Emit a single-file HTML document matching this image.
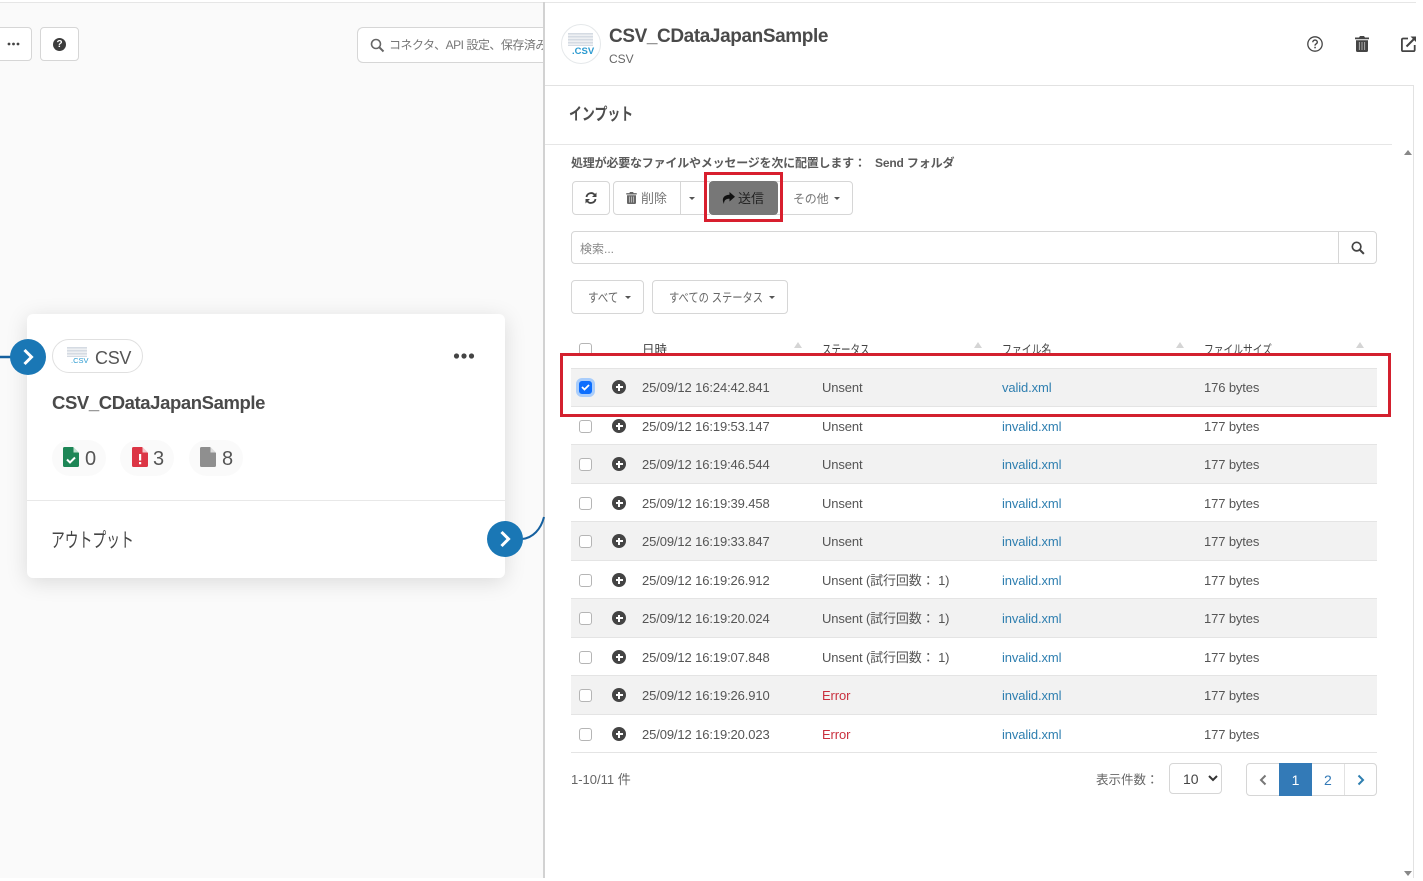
<!DOCTYPE html>
<html lang="ja"><head><meta charset="utf-8"><title>CSV_CDataJapanSample</title>
<style>
html,body{margin:0;padding:0;background:#fff}
body{width:1423px;height:881px;position:relative;overflow:hidden;font-family:"Liberation Sans","Noto Sans CJK JP",sans-serif;font-size:13px;color:#555}
.t{position:absolute;white-space:nowrap;line-height:18px;transform-origin:left center}
.btn{position:absolute;box-sizing:border-box;background:#fff;border:1px solid #d6d6d6;border-radius:4px}
.row{position:absolute;left:571px;width:806px;height:37px;border-bottom:1px solid #e4e4e4;white-space:nowrap}
.row.s{background:#f2f2f2;height:38px}
.row>span{position:absolute;top:11px;line-height:18px;letter-spacing:-.12px}
.row>.cb{top:13px;left:8px;width:11px;height:11px;border:1px solid #b5b5b5;border-radius:3px;background:#fff}
.row>.pl{top:12px;left:41px;width:14px;height:14px;border-radius:50%;background:#444}
.row>.pl:before{content:"";position:absolute;left:3.5px;top:6px;width:7px;height:2px;background:#fff}
.row>.pl:after{content:"";position:absolute;left:6px;top:3.5px;width:2px;height:7px;background:#fff}
.d{left:71px}.st{left:251px}.f{left:431px;color:#2f7fb0}.z{left:633px}.e{color:#c9303e}
.car{position:absolute;width:0;height:0;border-left:3px solid transparent;border-right:3px solid transparent;border-top:3px solid #555}
.sort{position:absolute;width:0;height:0;border-left:4px solid transparent;border-right:4px solid transparent;border-bottom:6px solid #d5d5d5}
</style></head><body>

<!-- left canvas -->
<div style="position:absolute;left:0;top:3px;width:544px;height:875px;background:#fafafa"></div>
<div style="position:absolute;left:0;top:2px;width:1416px;height:1px;background:#e6e6e6"></div>
<div style="position:absolute;left:543px;top:2px;width:2px;height:876px;background:#d2d2d2"></div>

<div class="btn" style="left:-10px;top:27px;width:42px;height:34px"></div>
<svg style="position:absolute;left:0;top:40px" width="24" height="8" viewBox="0 0 24 8"><circle cx="9" cy="4" r="1.400" fill="#444"/><circle cx="13.500" cy="4" r="1.400" fill="#444"/><circle cx="18" cy="4" r="1.400" fill="#444"/></svg>
<div class="btn" style="left:40px;top:27px;width:39px;height:34px"></div>
<div style="position:absolute;left:53px;top:38px;width:13px;height:13px;border-radius:50%;background:#3c3c3c;color:#fff;font:bold 10px/13px 'Liberation Sans',sans-serif;text-align:center">?</div>

<div style="position:absolute;left:357px;top:27px;width:186px;height:36px;box-sizing:border-box;border:1px solid #d6d6d6;border-right:0;border-radius:6px 0 0 6px;background:#fff;overflow:hidden">
<svg style="position:absolute;left:12px;top:10px" width="15" height="15" viewBox="0 0 15 15"><circle cx="6" cy="6" r="4.500" fill="none" stroke="#666" stroke-width="1.600"/><path d="M9.500 9.500L13.500 13.500" stroke="#666" stroke-width="2"/></svg>
<span class="t" style="left:31px;top:8px;font-size:12px;color:#777;letter-spacing:-.5px">コネクタ、API 設定、保存済み</span>
</div>

<!-- card -->
<div style="position:absolute;left:27px;top:314px;width:478px;height:264px;background:#fff;border-radius:6px;box-shadow:0 4px 22px rgba(0,0,0,.13)"></div>
<div style="position:absolute;left:27px;top:500px;width:478px;height:1px;background:#e8e8e8"></div>
<svg style="position:absolute;left:0;top:330px" width="546" height="230" viewBox="0 0 546 230"><path d="M0 27H12" stroke="#15609f" stroke-width="2.500" fill="none"/><path d="M522 209C533 208 541 199 544 187" stroke="#15609f" stroke-width="2" fill="none"/></svg>
<svg style="position:absolute;left:10px;top:339px" width="36" height="36" viewBox="0 0 36 36"><circle cx="18" cy="18" r="18" fill="#1a77b5"/><path d="M14.500 11l7 7-7 7" fill="none" stroke="#fff" stroke-width="3"/></svg>
<svg style="position:absolute;left:487px;top:521px" width="36" height="36" viewBox="0 0 36 36"><circle cx="18" cy="18" r="18" fill="#1a77b5"/><path d="M14.500 11l7 7-7 7" fill="none" stroke="#fff" stroke-width="3"/></svg>

<div style="position:absolute;left:52px;top:339px;width:91px;height:34px;box-sizing:border-box;border:1px solid #e0e0e0;border-radius:17px;background:#fff"></div>
<div style="position:absolute;left:67px;top:347px;width:20px;height:10px;background:repeating-linear-gradient(#d5dbe3 0,#d5dbe3 1.500px,#eef0f3 1.500px,#eef0f3 3px)"></div>
<div class="t" style="left:71px;top:355px;font-size:7.500px;line-height:12px;color:#2b9ad0">.CSV</div>
<div class="t" style="left:95px;top:346px;font-size:18px;line-height:24px;color:#555;letter-spacing:-.3px">CSV</div>
<svg style="position:absolute;left:452px;top:351px" width="24" height="10" viewBox="0 0 24 10"><circle cx="4.500" cy="5" r="2.600" fill="#444"/><circle cx="12" cy="5" r="2.600" fill="#444"/><circle cx="19.500" cy="5" r="2.600" fill="#444"/></svg>
<div class="t" style="left:52px;top:390px;font-size:18.500px;line-height:26px;font-weight:bold;color:#4a4a4a;letter-spacing:-.4px">CSV_CDataJapanSample</div>

<div style="position:absolute;left:52px;top:440px;width:54px;height:36px;border-radius:18px;background:#fafafa"></div>
<div style="position:absolute;left:120px;top:440px;width:54px;height:36px;border-radius:18px;background:#fafafa"></div>
<div style="position:absolute;left:189px;top:440px;width:54px;height:36px;border-radius:18px;background:#fafafa"></div>
<svg style="position:absolute;left:63px;top:447px" width="16" height="20" viewBox="0 0 16 20"><path d="M1.500 0H10L16 6V18.500A1.500 1.500 0 0 1 14.500 20H1.500A1.500 1.500 0 0 1 0 18.500V1.500A1.500 1.500 0 0 1 1.500 0Z" fill="#1d8656"/><path d="M10.500 0L16 5.500H10.500Z" fill="#bfe0cf"/><path d="M4 12.500l3 3 5-5" fill="none" stroke="#fff" stroke-width="2"/></svg>
<div class="t" style="left:85px;top:447px;font-size:20px;line-height:24px;color:#555">0</div>
<svg style="position:absolute;left:132px;top:447px" width="16" height="20" viewBox="0 0 16 20"><path d="M1.500 0H10L16 6V18.500A1.500 1.500 0 0 1 14.500 20H1.500A1.500 1.500 0 0 1 0 18.500V1.500A1.500 1.500 0 0 1 1.500 0Z" fill="#dc3545"/><path d="M10.500 0L16 5.500H10.500Z" fill="#f5c6cb"/><path d="M7 7h2.200v6.500H7zM7 15h2.200v2.200H7z" fill="#fff"/></svg>
<div class="t" style="left:153px;top:447px;font-size:20px;line-height:24px;color:#555">3</div>
<svg style="position:absolute;left:200px;top:447px" width="16" height="20" viewBox="0 0 16 20"><path d="M1.500 0H10L16 6V18.500A1.500 1.500 0 0 1 14.500 20H1.500A1.500 1.500 0 0 1 0 18.500V1.500A1.500 1.500 0 0 1 1.500 0Z" fill="#8f8f8f"/><path d="M10.500 0L16 5.500H10.500Z" fill="#ddd"/></svg>
<div class="t" style="left:222px;top:447px;font-size:20px;line-height:24px;color:#555">8</div>
<div class="t" style="left:51px;top:528px;font-size:20px;line-height:26px;color:#444;transform:scaleX(.69)">アウトプット</div>

<!-- right panel -->
<div style="position:absolute;left:545px;top:85px;width:868px;height:1px;background:#e2e2e2"></div>
<div style="position:absolute;left:545px;top:144px;width:847px;height:1px;background:#e6e6e6"></div>
<div style="position:absolute;left:1413px;top:85px;width:1px;height:793px;background:#e2e2e2"></div>
<div class="sort" style="left:1404px;top:150px;border-bottom-color:#888;border-bottom-width:5px"></div>
<div class="sort" style="left:1404px;top:871px;border-bottom:0;border-top:5px solid #888"></div>

<div style="position:absolute;left:561px;top:24px;width:38px;height:38px;border:1px solid #e5e8ea;border-radius:50%;background:#fff"></div>
<div style="position:absolute;left:568px;top:33px;width:25px;height:13px;background:repeating-linear-gradient(#d5dbe3 0,#d5dbe3 1.500px,#eef0f3 1.500px,#eef0f3 3px)"></div>
<div class="t" style="left:572px;top:45px;font-size:9.500px;line-height:13px;font-weight:bold;color:#2b9ad0">.CSV</div>
<div class="t" style="left:609px;top:24px;font-size:19px;line-height:26px;font-weight:bold;color:#4a4a4a;letter-spacing:-.4px">CSV_CDataJapanSample</div>
<div class="t" style="left:609px;top:50px;font-size:12px;color:#666">CSV</div>

<svg style="position:absolute;left:1307px;top:36px" width="16" height="16" viewBox="0 0 16 16"><circle cx="8" cy="8" r="7.200" fill="none" stroke="#444" stroke-width="1.300"/><path d="M5.800 6.200C5.800 3.400 10.300 3.400 10.300 6.200C10.300 7.800 8 7.800 8 9.600" fill="none" stroke="#444" stroke-width="1.400"/><rect x="7.300" y="10.800" width="1.500" height="1.500" fill="#444"/></svg>
<svg style="position:absolute;left:1355px;top:36px" width="14" height="16" viewBox="0 0 14 16"><path d="M5 0H9L10 1.500H14V3.300H0V1.500H4Z" fill="#444"/><path d="M1 4.300H13V14.500A1.500 1.500 0 0 1 11.500 16H2.500A1.500 1.500 0 0 1 1 14.500Z" fill="#444"/><path d="M4.400 6V14M7 6V14M9.600 6V14" stroke="#aaa" stroke-width="1"/></svg>
<svg style="position:absolute;left:1401px;top:36px" width="15" height="16" viewBox="0 0 15 16"><path d="M7 2.500H2A1.200 1.200 0 0 0 .9 3.700V14A1.200 1.200 0 0 0 2 15.200H12.500A1.200 1.200 0 0 0 13.700 14V9" fill="none" stroke="#444" stroke-width="1.800"/><path d="M5.500 10.500L14 2" stroke="#444" stroke-width="2"/><path d="M9.500 0.500H15V6Z" fill="#444"/></svg>
<div style="position:absolute;left:1416px;top:0;width:7px;height:881px;background:#fff"></div>

<div class="t" style="left:569px;top:103px;font-size:17px;line-height:24px;font-weight:bold;color:#4d4d4d;transform:scaleX(.76)">インプット</div>
<div class="t" style="left:571px;top:154px;font-size:12px;font-weight:bold;color:#5a5a5a;letter-spacing:-.2px">処理が必要なファイルやメッセージを次に配置します：</div>
<div class="t" style="left:875px;top:154px;font-size:12px;font-weight:bold;color:#5a5a5a;letter-spacing:-.15px">Send フォルダ</div>

<!-- toolbar -->
<div class="btn" style="left:572px;top:181px;width:38px;height:34px"></div>
<svg style="position:absolute;left:585px;top:192px" width="12" height="12" viewBox="0 0 12 12"><path d="M1.500 5A4.600 4.600 0 0 1 9.800 3" fill="none" stroke="#444" stroke-width="1.800"/><path d="M11.500 0.500V5H7Z" fill="#444"/><path d="M10.500 7A4.600 4.600 0 0 1 2.200 9" fill="none" stroke="#444" stroke-width="1.800"/><path d="M.5 11.500V7H5Z" fill="#444"/></svg>
<div class="btn" style="left:613px;top:181px;width:68px;height:34px;border-radius:4px 0 0 4px"></div>
<div class="btn" style="left:680px;top:181px;width:30px;height:34px;border-radius:0;border-right:0"></div>
<svg style="position:absolute;left:626px;top:192px" width="11" height="12" viewBox="0 0 14 16"><path d="M5 0H9L10 1.500H14V3.300H0V1.500H4Z" fill="#666"/><path d="M1 4.300H13V14.500A1.500 1.500 0 0 1 11.500 16H2.500A1.500 1.500 0 0 1 1 14.500Z" fill="#666"/><path d="M4.400 6V14M7 6V14M9.600 6V14" stroke="#ccc"/></svg>
<div class="t" style="left:641px;top:190px;font-size:13px;color:#777">削除</div>
<div class="car" style="left:689px;top:197px"></div>
<div class="btn" style="left:775px;top:181px;width:78px;height:34px;border-radius:0 4px 4px 0"></div>
<div class="t" style="left:793px;top:190px;font-size:12px;color:#777;letter-spacing:-.2px">その他</div>
<div class="car" style="left:834px;top:197px"></div>
<div style="position:absolute;left:709px;top:181px;width:69px;height:34px;border-radius:4px;background:#777"></div>
<svg style="position:absolute;left:722px;top:192px" width="13" height="12" viewBox="0 0 13 12"><path d="M7.500 0L13 4.800 7.500 9.500V6.800C4 6.800 2 8 2 12 -.5 7.500 1 3 7.500 2.800Z" fill="#111"/></svg>
<div class="t" style="left:738px;top:190px;font-size:13px;color:#222">送信</div>
<div style="position:absolute;left:704px;top:172px;width:73px;height:44px;border:3px solid #d81f2e"></div>

<!-- search -->
<div class="btn" style="left:571px;top:231px;width:806px;height:33px"></div>
<div style="position:absolute;left:1338px;top:232px;width:1px;height:31px;background:#d6d6d6"></div>
<div class="t" style="left:580px;top:240px;font-size:12px;color:#888">検索...</div>
<svg style="position:absolute;left:1351px;top:241px" width="14" height="14" viewBox="0 0 15 15"><circle cx="6" cy="6" r="4.600" fill="none" stroke="#444" stroke-width="1.800"/><path d="M9.500 9.500L13.800 13.800" stroke="#444" stroke-width="2.200"/></svg>

<div class="btn" style="left:571px;top:280px;width:73px;height:34px"></div>
<div class="t" style="left:588px;top:289px;font-size:12.500px;color:#666;transform:scaleX(.84)">すべて</div>
<div class="car" style="left:625px;top:296px"></div>
<div class="btn" style="left:652px;top:280px;width:136px;height:34px"></div>
<div class="t" style="left:669px;top:289px;font-size:12.500px;color:#666;transform:scaleX(.82)">すべての ステータス</div>
<div class="car" style="left:769px;top:296px"></div>

<!-- table head -->
<div style="position:absolute;left:579px;top:343px;width:11px;height:11px;border:1px solid #b5b5b5;border-radius:3px"></div>
<div class="t" style="left:642px;top:341px;font-size:12.500px;color:#444">日時</div>
<div class="t" style="left:822px;top:341px;font-size:12.500px;color:#444;transform:scaleX(.76)">ステータス</div>
<div class="t" style="left:1002px;top:341px;font-size:12.500px;color:#444;transform:scaleX(.79)">ファイル名</div>
<div class="t" style="left:1204px;top:341px;font-size:12.500px;color:#444;transform:scaleX(.78)">ファイルサイズ</div>
<div class="sort" style="left:794px;top:342px"></div>
<div class="sort" style="left:974px;top:342px"></div>
<div class="sort" style="left:1176px;top:342px"></div>
<div class="sort" style="left:1356px;top:342px"></div>

<!-- rows -->
<div class="row s" style="top:368px;box-shadow:inset 0 1px #e4e4e4"><span class="cb" style="background:#0d6efd;border-color:#0d6efd;box-shadow:0 0 0 3px #a9cdfb"></span><svg style="position:absolute;left:9px;top:14px" width="11" height="10" viewBox="0 0 11 10"><path d="M2 5l2.500 2.500L9 3" fill="none" stroke="#fff" stroke-width="1.800"/></svg><span class="pl"></span><span class="d">25/09/12 16:24:42.841</span><span class="st">Unsent</span><span class="f">valid.xml</span><span class="z">176 bytes</span></div>
<div class="row" style="top:407px"><span class="cb"></span><span class="pl"></span><span class="d">25/09/12 16:19:53.147</span><span class="st">Unsent</span><span class="f">invalid.xml</span><span class="z">177 bytes</span></div>
<div class="row s" style="top:445px"><span class="cb"></span><span class="pl"></span><span class="d">25/09/12 16:19:46.544</span><span class="st">Unsent</span><span class="f">invalid.xml</span><span class="z">177 bytes</span></div>
<div class="row" style="top:484px"><span class="cb"></span><span class="pl"></span><span class="d">25/09/12 16:19:39.458</span><span class="st">Unsent</span><span class="f">invalid.xml</span><span class="z">177 bytes</span></div>
<div class="row s" style="top:522px"><span class="cb"></span><span class="pl"></span><span class="d">25/09/12 16:19:33.847</span><span class="st">Unsent</span><span class="f">invalid.xml</span><span class="z">177 bytes</span></div>
<div class="row" style="top:561px"><span class="cb"></span><span class="pl"></span><span class="d">25/09/12 16:19:26.912</span><span class="st">Unsent (試行回数： 1)</span><span class="f">invalid.xml</span><span class="z">177 bytes</span></div>
<div class="row s" style="top:599px"><span class="cb"></span><span class="pl"></span><span class="d">25/09/12 16:19:20.024</span><span class="st">Unsent (試行回数： 1)</span><span class="f">invalid.xml</span><span class="z">177 bytes</span></div>
<div class="row" style="top:638px"><span class="cb"></span><span class="pl"></span><span class="d">25/09/12 16:19:07.848</span><span class="st">Unsent (試行回数： 1)</span><span class="f">invalid.xml</span><span class="z">177 bytes</span></div>
<div class="row s" style="top:676px"><span class="cb"></span><span class="pl"></span><span class="d">25/09/12 16:19:26.910</span><span class="st e">Error</span><span class="f">invalid.xml</span><span class="z">177 bytes</span></div>
<div class="row" style="top:715px"><span class="cb"></span><span class="pl"></span><span class="d">25/09/12 16:19:20.023</span><span class="st e">Error</span><span class="f">invalid.xml</span><span class="z">177 bytes</span></div>

<!-- red highlight -->
<div style="position:absolute;left:560px;top:353px;width:825px;height:12px;border:3px solid #d3202e;border-bottom:0;background:#fff"></div>
<div style="position:absolute;left:560px;top:353px;width:825px;height:58px;border:3px solid #d3202e"></div>

<!-- footer -->
<div class="t" style="left:571px;top:771px;font-size:13px;color:#666">1-10/11 件</div>
<div class="t" style="left:1096px;top:771px;font-size:12.500px;color:#666">表示件数：</div>
<div class="btn" style="left:1169px;top:763px;width:53px;height:31px"></div>
<div class="t" style="left:1183px;top:770px;font-size:14px;color:#444">10</div>
<svg style="position:absolute;left:1208px;top:775px" width="10" height="7" viewBox="0 0 10 7"><path d="M1 1l4 4 4-4" fill="none" stroke="#333" stroke-width="2"/></svg>
<div class="btn" style="left:1246px;top:763px;width:131px;height:33px"></div>
<div style="position:absolute;left:1279px;top:763px;width:33px;height:33px;background:#337ab7;color:#fff;text-align:center;font-size:14px;line-height:34px">1</div>
<div class="t" style="left:1324px;top:771px;font-size:14px;color:#337ab7">2</div>
<div style="position:absolute;left:1344px;top:764px;width:1px;height:31px;background:#e2e2e2"></div>
<svg style="position:absolute;left:1259px;top:774px" width="8" height="12" viewBox="0 0 8 12"><path d="M6.500 1.500L2 6l4.500 4.500" fill="none" stroke="#777" stroke-width="2"/></svg>
<svg style="position:absolute;left:1357px;top:774px" width="8" height="12" viewBox="0 0 8 12"><path d="M1.500 1.500L6 6l-4.500 4.500" fill="none" stroke="#2f7fb0" stroke-width="2"/></svg>
<div style="position:absolute;left:0;top:878px;width:1423px;height:3px;background:#fff"></div>
</body></html>
